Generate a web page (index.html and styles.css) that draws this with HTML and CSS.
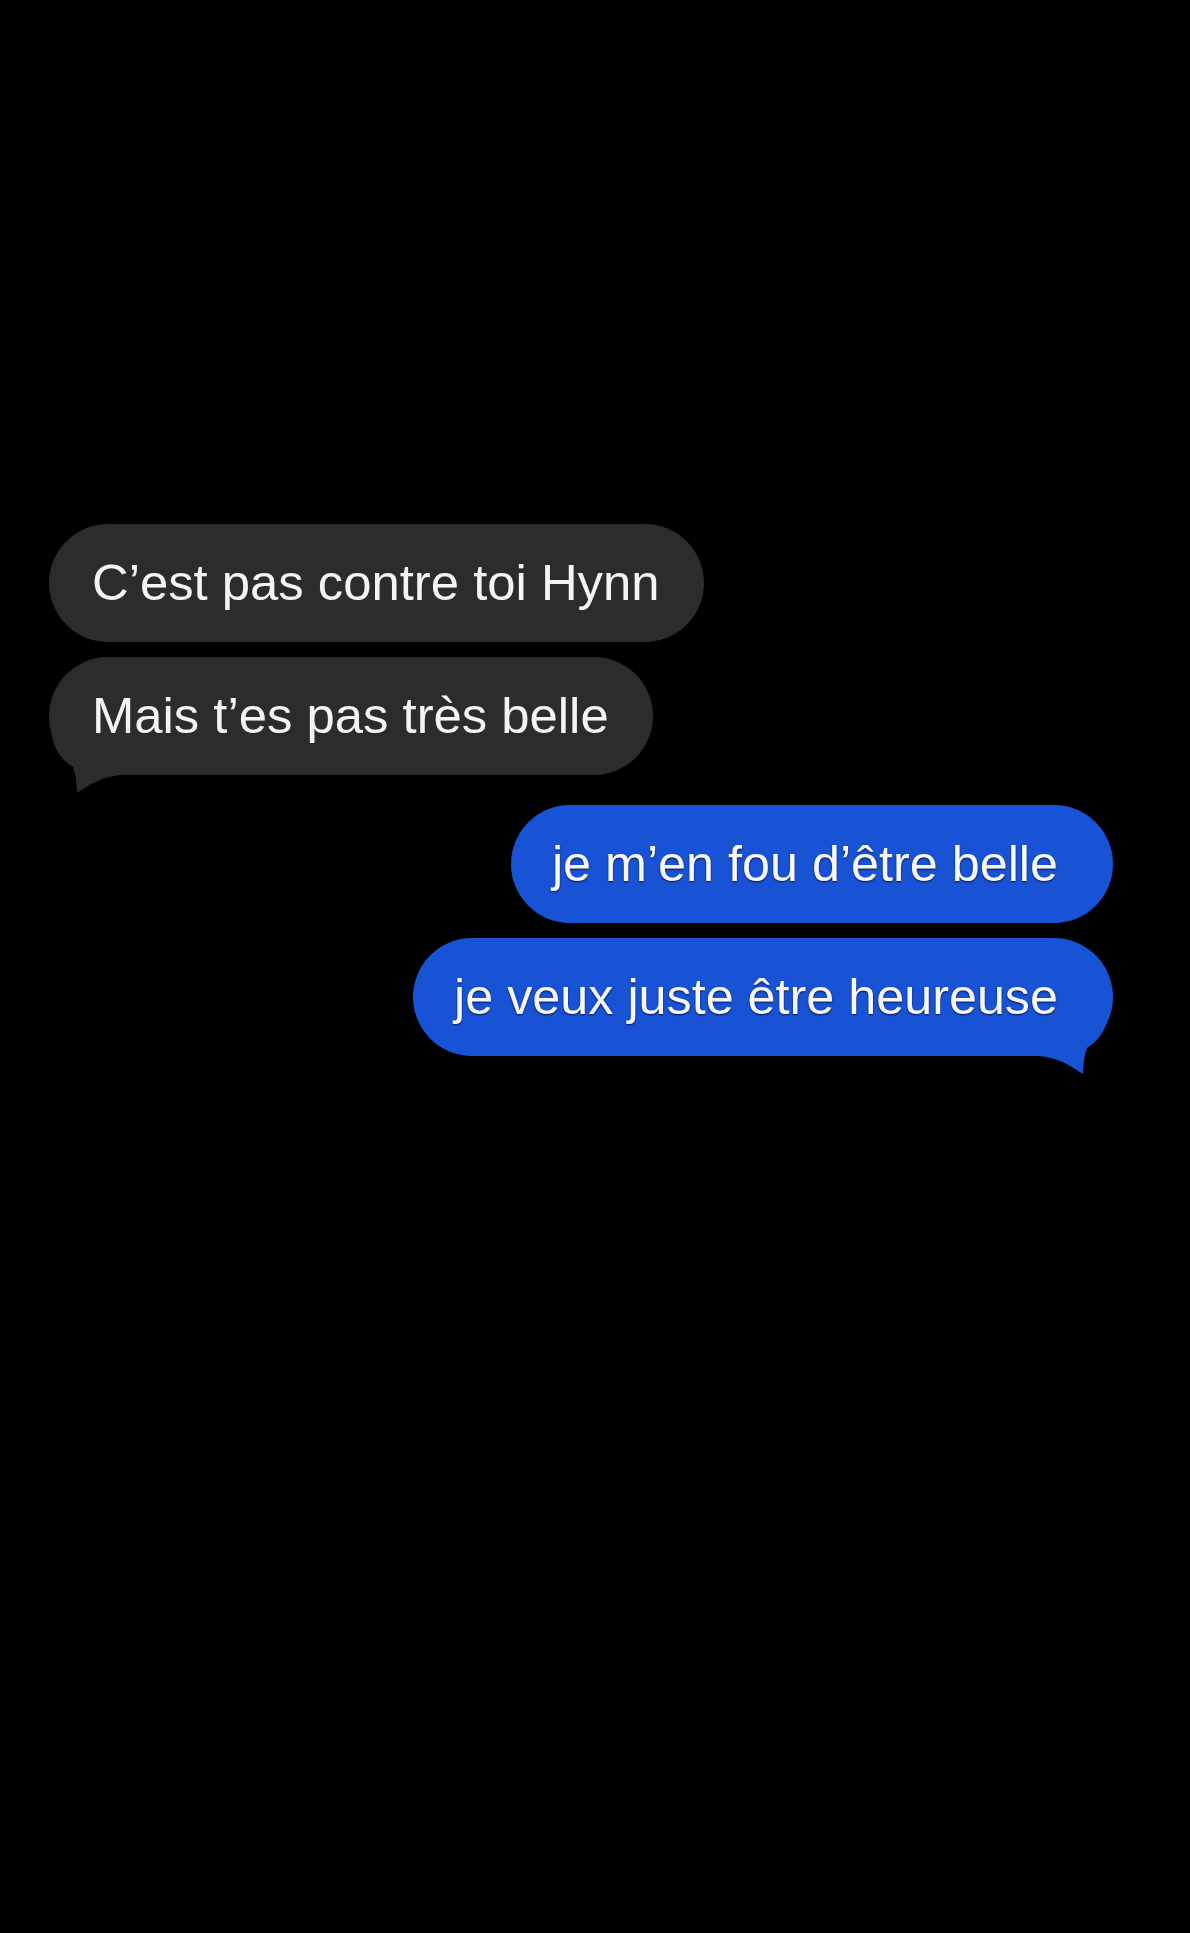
FILE: index.html
```html
<!DOCTYPE html>
<html lang="fr">
<head>
<meta charset="utf-8">
<title>Messages</title>
<link rel="stylesheet" href="styles.css">
</head>
<body>
<main class="thread">
  <div class="bubble in"><span class="txt">C’est pas contre toi Hynn</span></div>
  <div class="bubble in">
    <svg class="tail-svg" viewBox="0 0 90 80" aria-hidden="true"><path d="M2 5 L2 10 C4 30 14 41 24 47 C27 55 28 65 28 73 C38 67 50 57 72 55 L72 5 Z"/></svg>
    <span class="txt">Mais t’es pas très belle</span>
  </div>
  <div class="bubble out first-out"><span class="txt">je m’en fou d’être belle</span></div>
  <div class="bubble out">
    <svg class="tail-svg" viewBox="0 0 90 80" aria-hidden="true"><path d="M2 5 L2 10 C4 30 14 41 24 47 C27 55 28 65 28 73 C38 67 50 57 72 55 L72 5 Z"/></svg>
    <span class="txt">je veux juste être heureuse</span>
  </div>
</main>
</body>
</html>
```
FILE: styles.css
```css
html, body {
  margin: 0;
  padding: 0;
  background: #000;
}
body {
  width: 1190px;
  height: 1933px;
  overflow: hidden;
  font-family: "Liberation Sans", Arial, sans-serif;
}
.thread {
  display: flex;
  flex-direction: column;
  gap: 15px;
  padding-top: 524px;
}
.bubble {
  position: relative;
  box-sizing: border-box;
  height: 118px;
  border-radius: 59px;
  font-size: 50.8px;
  line-height: 118px;
  white-space: nowrap;
}
.txt {
  position: relative;
  z-index: 1;
}
.bubble.in {
  align-self: flex-start;
  margin-left: 49px;
  background: #2c2c2e;
  color: #f4f4f4;
  padding: 0 44px 0 43px;
}
.bubble.out {
  align-self: flex-end;
  margin-right: 77px;
  background: #1853d6;
  color: #f7f7fa;
  font-size: 50.3px;
  padding: 0 55px 0 41px;
  text-shadow: 0 1px 2px rgba(0, 0, 30, 0.75);
}
.bubble.first-out {
  margin-top: 15px;
}
.tail-svg {
  position: absolute;
  bottom: -25px;
  width: 90px;
  height: 80px;
}
.in .tail-svg {
  left: 0;
  fill: #2c2c2e;
}
.out .tail-svg {
  right: 2px;
  fill: #1853d6;
  transform: scaleX(-1);
}
```
